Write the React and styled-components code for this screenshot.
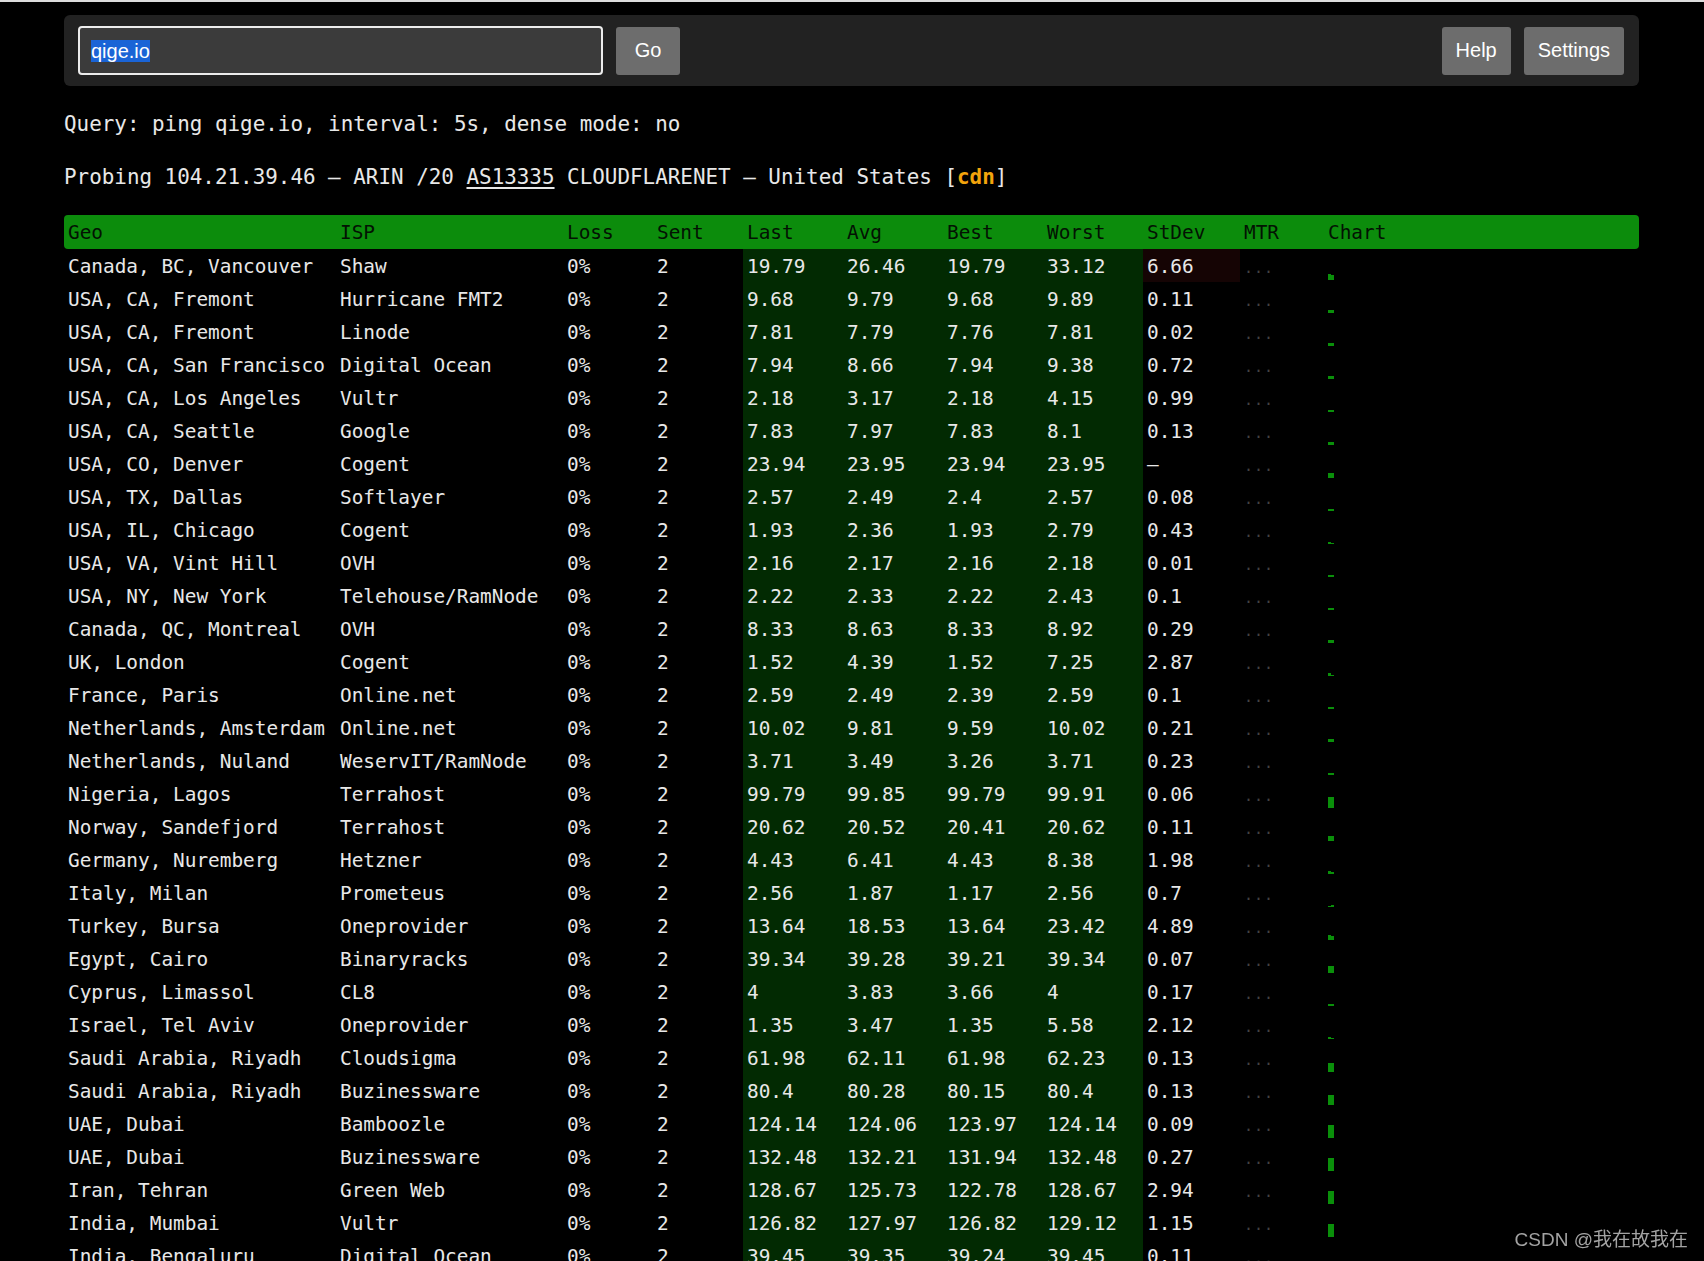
import React from 'react';
import styled, { createGlobalStyle } from 'styled-components';

const GlobalStyle = createGlobalStyle`
  html, body {
    margin: 0;
    padding: 0;
    background: #000;
  }
  body {
    border-top: 2px solid #dcdcdc;
    font-family: 'DejaVu Sans Mono', 'Liberation Mono', monospace;
    color: #e8e8e8;
  }
`;

const Page = styled.div`
  padding: 13px 65px 0 64px;
`;

const Toolbar = styled.div`
  display: flex;
  align-items: center;
  height: 71px;
  padding: 0 15px 0 14px;
  background: #222;
  border-radius: 6px;
  font-family: 'Liberation Sans', Arial, sans-serif;
  font-size: 20px;
`;

const Field = styled.div`
  box-sizing: border-box;
  display: flex;
  align-items: center;
  width: 525px;
  height: 49px;
  padding: 0 11px;
  background: #3b3b3b;
  border: 2px solid #ececec;
  border-radius: 4px;
  color: #fff;
`;

const Selected = styled.span`
  background: #1a64d6;
  line-height: 22px;
`;

const Button = styled.button`
  height: 48px;
  min-width: 64px;
  margin-left: 13px;
  padding: 0 14px;
  border: none;
  border-radius: 3px;
  background: #6d6d6d;
  color: #fff;
  font-family: inherit;
  font-size: 20px;
`;

const Spacer = styled.div`
  flex: 1;
`;

const Line = styled.p`
  margin: ${p => p.$top}px 0 0;
  font-size: 20.9px;
  line-height: 26px;
  white-space: pre;
`;

const Asn = styled.span`
  text-decoration: underline;
  text-underline-offset: 3px;
`;

const Tag = styled.span`
  color: #f3a40c;
  font-weight: bold;
`;

const Table = styled.table`
  margin-top: 25px;
  width: 100%;
  table-layout: fixed;
  border-collapse: collapse;
  font-size: 19.4px;
`;

const Head = styled.th`
  box-sizing: border-box;
  width: ${p => (p.$w ? `${p.$w}px` : 'auto')};
  height: 34px;
  padding: 0 4px;
  background: #0c8c0c;
  color: #031203;
  font-weight: normal;
  text-align: left;
  &:first-child { border-radius: 4px 0 0 4px; }
  &:last-child { border-radius: 0 4px 4px 0; }
`;

const Cell = styled.td`
  box-sizing: border-box;
  height: 33px;
  padding: 1px 4px 0;
  background: ${p => p.$bg || 'transparent'};
  white-space: nowrap;
  overflow: hidden;
`;

const Dots = styled.span`
  color: #444;
  font-size: 15px;
  letter-spacing: 1px;
`;

const ChartCell = styled.td`
  box-sizing: border-box;
  height: 33px;
  padding: 0 4px 2px;
  vertical-align: bottom;
`;

const Bars = styled.div`
  display: flex;
  align-items: flex-end;
`;

const Bar = styled.div`
  width: 3px;
  background: #0a8f0a;
`;

const Watermark = styled.div`
  position: fixed;
  right: 16px;
  bottom: 10px;
  font-family: 'Liberation Sans', 'Noto Sans CJK SC', sans-serif;
  font-size: 19px;
  color: #a3a3a3;
`;

const cols = [
  ['Geo', 272], ['ISP', 227], ['Loss', 90], ['Sent', 90], ['Last', 100],
  ['Avg', 100], ['Best', 100], ['Worst', 100], ['StDev', 97], ['MTR', 84], ['Chart', 0],
];

const rows = [
  ['Canada, BC, Vancouver', 'Shaw', '19.79', '26.46', '19.79', '33.12', '6.66'],
  ['USA, CA, Fremont', 'Hurricane FMT2', '9.68', '9.79', '9.68', '9.89', '0.11'],
  ['USA, CA, Fremont', 'Linode', '7.81', '7.79', '7.76', '7.81', '0.02'],
  ['USA, CA, San Francisco', 'Digital Ocean', '7.94', '8.66', '7.94', '9.38', '0.72'],
  ['USA, CA, Los Angeles', 'Vultr', '2.18', '3.17', '2.18', '4.15', '0.99'],
  ['USA, CA, Seattle', 'Google', '7.83', '7.97', '7.83', '8.1', '0.13'],
  ['USA, CO, Denver', 'Cogent', '23.94', '23.95', '23.94', '23.95', '–'],
  ['USA, TX, Dallas', 'Softlayer', '2.57', '2.49', '2.4', '2.57', '0.08'],
  ['USA, IL, Chicago', 'Cogent', '1.93', '2.36', '1.93', '2.79', '0.43'],
  ['USA, VA, Vint Hill', 'OVH', '2.16', '2.17', '2.16', '2.18', '0.01'],
  ['USA, NY, New York', 'Telehouse/RamNode', '2.22', '2.33', '2.22', '2.43', '0.1'],
  ['Canada, QC, Montreal', 'OVH', '8.33', '8.63', '8.33', '8.92', '0.29'],
  ['UK, London', 'Cogent', '1.52', '4.39', '1.52', '7.25', '2.87'],
  ['France, Paris', 'Online.net', '2.59', '2.49', '2.39', '2.59', '0.1'],
  ['Netherlands, Amsterdam', 'Online.net', '10.02', '9.81', '9.59', '10.02', '0.21'],
  ['Netherlands, Nuland', 'WeservIT/RamNode', '3.71', '3.49', '3.26', '3.71', '0.23'],
  ['Nigeria, Lagos', 'Terrahost', '99.79', '99.85', '99.79', '99.91', '0.06'],
  ['Norway, Sandefjord', 'Terrahost', '20.62', '20.52', '20.41', '20.62', '0.11'],
  ['Germany, Nuremberg', 'Hetzner', '4.43', '6.41', '4.43', '8.38', '1.98'],
  ['Italy, Milan', 'Prometeus', '2.56', '1.87', '1.17', '2.56', '0.7'],
  ['Turkey, Bursa', 'Oneprovider', '13.64', '18.53', '13.64', '23.42', '4.89'],
  ['Egypt, Cairo', 'Binaryracks', '39.34', '39.28', '39.21', '39.34', '0.07'],
  ['Cyprus, Limassol', 'CL8', '4', '3.83', '3.66', '4', '0.17'],
  ['Israel, Tel Aviv', 'Oneprovider', '1.35', '3.47', '1.35', '5.58', '2.12'],
  ['Saudi Arabia, Riyadh', 'Cloudsigma', '61.98', '62.11', '61.98', '62.23', '0.13'],
  ['Saudi Arabia, Riyadh', 'Buzinessware', '80.4', '80.28', '80.15', '80.4', '0.13'],
  ['UAE, Dubai', 'Bamboozle', '124.14', '124.06', '123.97', '124.14', '0.09'],
  ['UAE, Dubai', 'Buzinessware', '132.48', '132.21', '131.94', '132.48', '0.27'],
  ['Iran, Tehran', 'Green Web', '128.67', '125.73', '122.78', '128.67', '2.94'],
  ['India, Mumbai', 'Vultr', '126.82', '127.97', '126.82', '129.12', '1.15'],
  ['India, Bengaluru', 'Digital Ocean', '39.45', '39.35', '39.24', '39.45', '0.11'],
];

const green = '#022a02';

// two samples: the first one is recovered from avg and last
const barHeight = v => Math.max(1, Math.round(Math.pow(Math.max(v, 0), 0.53)));

function Chart({ last, avg }) {
  const l = parseFloat(last);
  const first = 2 * parseFloat(avg) - l;
  return (
    <Bars>
      <Bar style={{ height: barHeight(first) }} />
      <Bar style={{ height: barHeight(l) }} />
    </Bars>
  );
}

function App() {
  return (
    <>
      <GlobalStyle />
      <Page>
        <Toolbar>
          <Field><Selected>qige.io</Selected></Field>
          <Button>Go</Button>
          <Spacer />
          <Button>Help</Button>
          <Button>Settings</Button>
        </Toolbar>

        <Line $top={25}>Query: ping qige.io, interval: 5s, dense mode: no</Line>
        <Line $top={27}>
          Probing 104.21.39.46 – ARIN /20 <Asn>AS13335</Asn> CLOUDFLARENET – United States [<Tag>cdn</Tag>]
        </Line>

        <Table>
          <thead>
            <tr>
              {cols.map(([name, w]) => <Head key={name} $w={w}>{name}</Head>)}
            </tr>
          </thead>
          <tbody>
            {rows.map((r, i) => (
              <tr key={i}>
                <Cell>{r[0]}</Cell>
                <Cell>{r[1]}</Cell>
                <Cell>0%</Cell>
                <Cell>2</Cell>
                <Cell $bg={green}>{r[2]}</Cell>
                <Cell $bg={green}>{r[3]}</Cell>
                <Cell $bg={green}>{r[4]}</Cell>
                <Cell $bg={green}>{r[5]}</Cell>
                <Cell $bg={parseFloat(r[6]) > 5 ? '#150404' : 'transparent'}>{r[6]}</Cell>
                <Cell><Dots>...</Dots></Cell>
                <ChartCell><Chart last={r[2]} avg={r[3]} /></ChartCell>
              </tr>
            ))}
          </tbody>
        </Table>
      </Page>
      <Watermark>CSDN @我在故我在</Watermark>
    </>
  );
}

export default App;
